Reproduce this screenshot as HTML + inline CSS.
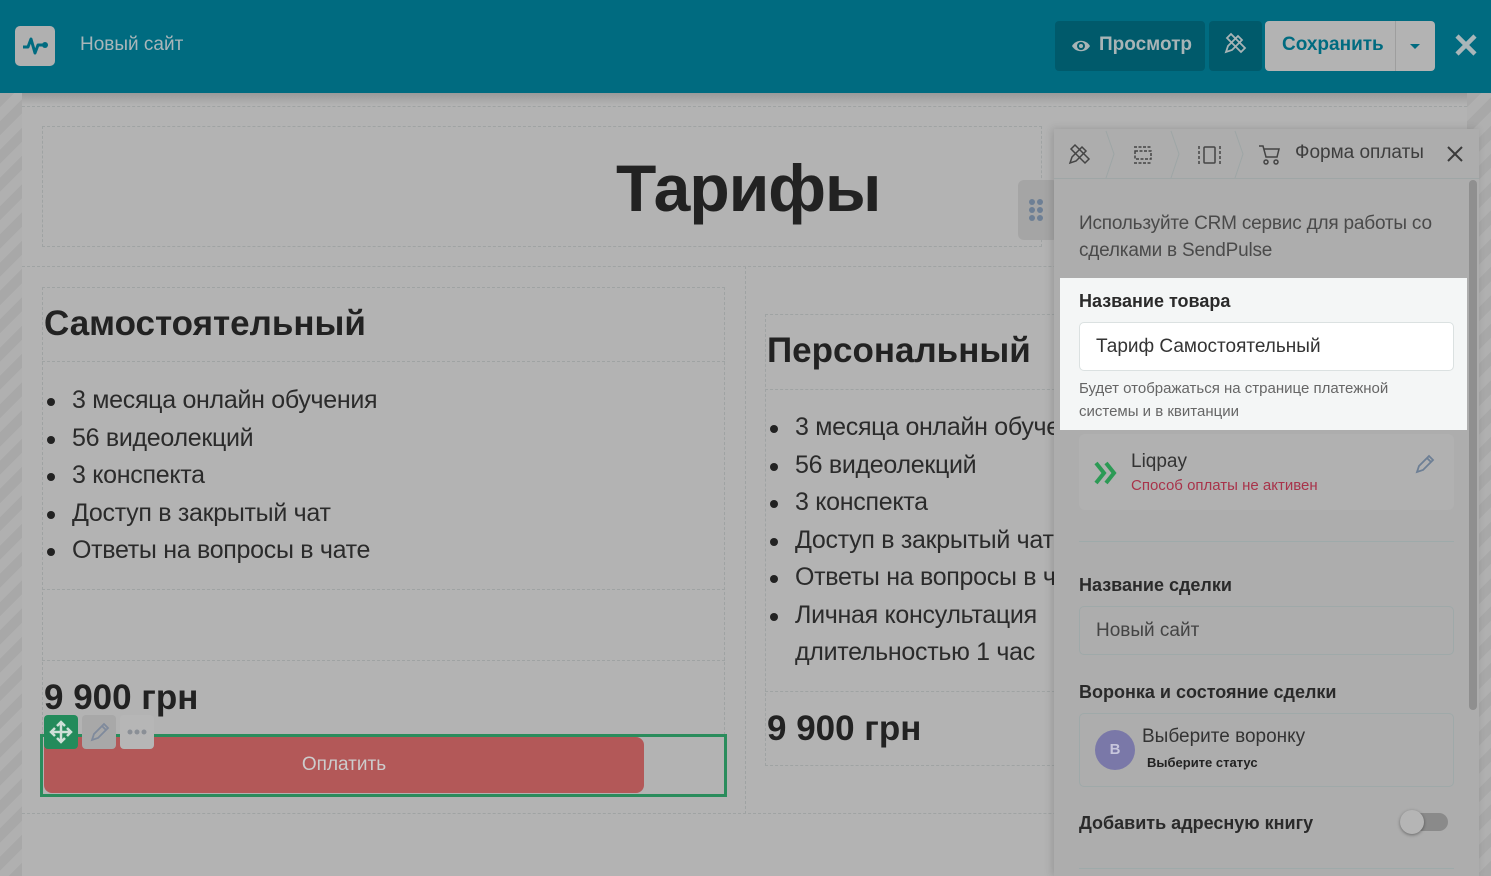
<!DOCTYPE html>
<html><head><meta charset="utf-8"><style>
*{box-sizing:border-box;margin:0;padding:0}
body{width:1491px;height:876px;overflow:hidden;position:relative;font-family:"Liberation Sans","Noto Sans CJK SC",sans-serif;background:#a9a9a9}
.abs{position:absolute}
.stripe{background:repeating-linear-gradient(135deg,#a8a8a8 0 10px,#b0b0b0 10px 20px)}
.hdr{left:0;top:0;width:1491px;height:93px;background:#006b80}
.page{left:22px;top:93px;width:1445px;height:783px;background:#b3b3b3}
.dot{border:1px dashed #9fa3a3}
.li{font-size:25px;color:#2b2b2b;line-height:37.5px;padding-left:28px;position:relative;white-space:nowrap;letter-spacing:-0.3px}
.li:before{content:"";position:absolute;left:3px;top:16px;width:8px;height:8px;border-radius:50%;background:#222}
.li.nb:before{display:none}
.panel{left:1054px;top:129px;width:425px;height:747px;background:#adadad;box-shadow:-2px 0 8px rgba(0,0,0,.15)}
.lbl{font-size:18px;font-weight:bold;color:#2a2a2a}
.inp{border:1px solid #9fa9a9;border-radius:5px;font-size:19px;color:#444}
</style></head><body>
<div class="abs stripe" style="left:0;top:93px;width:22px;height:783px"></div>
<div class="abs stripe" style="left:1467px;top:93px;width:24px;height:783px"></div>
<div class="abs page"></div>
<div class="abs" style="left:22px;top:93px;width:1445px;height:12px;background:linear-gradient(#9a9a9a,#b3b3b3)"></div>
<div class="abs dot" style="left:22px;top:106px;width:1445px;height:0;border-width:1px 0 0 0"></div>
<div class="abs dot" style="left:42px;top:126px;width:1000px;height:121px"></div>
<div class="abs" style="left:616px;top:150px;font-size:66px;font-weight:bold;color:#222;letter-spacing:-1px">Тарифы</div>
<div class="abs dot" style="left:22px;top:266px;width:1445px;height:548px;border-width:1px 0 1px 0"></div>
<div class="abs dot" style="left:745px;top:266px;width:0;height:548px;border-width:0 0 0 1px"></div>
<div class="abs dot" style="left:42px;top:287px;width:683px;height:448px"></div>
<div class="abs dot" style="left:42px;top:361px;width:683px;height:0;border-width:1px 0 0 0"></div>
<div class="abs dot" style="left:42px;top:589px;width:683px;height:0;border-width:1px 0 0 0"></div>
<div class="abs dot" style="left:42px;top:660px;width:683px;height:0;border-width:1px 0 0 0"></div>
<div class="abs" style="left:44px;top:304px;font-size:35px;font-weight:bold;color:#222">Самостоятельный</div>
<div class="abs" style="left:44px;top:382px">
<div class="li">3 месяца онлайн обучения</div><div class="li">56 видеолекций</div><div class="li">3 конспекта</div><div class="li">Доступ в закрытый чат</div><div class="li">Ответы на вопросы в чате</div></div>
<div class="abs" style="left:44px;top:678px;font-size:35px;font-weight:bold;color:#222">9 900 грн</div>
<div class="abs" style="left:40px;top:734px;width:687px;height:63px;border:3px solid #2a8c5c"></div>
<div class="abs" style="left:44px;top:737px;width:600px;height:56px;background:#b35858;border-radius:8px;color:#ccc;font-size:19px;text-align:center;line-height:56px">Оплатить</div>
<div class="abs" style="left:44px;top:715px;width:34px;height:34px;background:#238b5b;border-radius:4px">
<svg width="34" height="34"><path d="M17 7v20M7 17h20M13 11l4-4 4 4M13 23l4 4 4-4M11 13l-4 4 4 4M23 13l4 4-4 4" fill="none" stroke="#cfe0d8" stroke-width="2.5"/></svg></div>
<div class="abs" style="left:82px;top:715px;width:34px;height:34px;background:#a8a8a8;border-radius:4px">
<svg width="34" height="34"><path d="M10 25l2-6 10-10 4 4-10 10z M20 11l4 4" fill="none" stroke="#7f8a9c" stroke-width="1.8"/></svg></div>
<div class="abs" style="left:120px;top:715px;width:34px;height:34px;background:#b6b6b6;border-radius:4px">
<svg width="34" height="34"><circle cx="10" cy="17" r="2.5" fill="#8a8f96"/><circle cx="17" cy="17" r="2.5" fill="#8a8f96"/><circle cx="24" cy="17" r="2.5" fill="#8a8f96"/></svg></div>
<div class="abs dot" style="left:765px;top:314px;width:300px;height:452px;border-right:0"></div>
<div class="abs dot" style="left:765px;top:389px;width:300px;height:0;border-width:1px 0 0 0"></div>
<div class="abs dot" style="left:765px;top:691px;width:300px;height:0;border-width:1px 0 0 0"></div>
<div class="abs" style="left:767px;top:331px;font-size:35px;font-weight:bold;color:#222">Персональный</div>
<div class="abs" style="left:767px;top:409px;width:287px;overflow:hidden">
<div class="li">3 месяца онлайн обучения</div><div class="li">56 видеолекций</div><div class="li">3 конспекта</div><div class="li">Доступ в закрытый чат</div><div class="li">Ответы на вопросы в чате</div><div class="li">Личная консультация</div><div class="li nb">длительностью 1 час</div></div>
<div class="abs" style="left:767px;top:709px;font-size:35px;font-weight:bold;color:#222">9 900 грн</div>
<div class="abs" style="left:1018px;top:180px;width:40px;height:60px;background:#a5a5a5;border-radius:6px">
<svg width="40" height="60"><g fill="#6d7f95"><circle cx="14" cy="22" r="3"/><circle cx="22" cy="22" r="3"/><circle cx="14" cy="30" r="3"/><circle cx="22" cy="30" r="3"/><circle cx="14" cy="38" r="3"/><circle cx="22" cy="38" r="3"/></g></svg></div>

<div class="abs hdr"></div>
<div class="abs" style="left:15px;top:26px;width:40px;height:40px;background:#b0b0b0;border-radius:5px">
<svg width="40" height="40"><path d="M8 21h5l3-8 4 14 3-8h5" fill="none" stroke="#006b80" stroke-width="3" stroke-linejoin="round"/><circle cx="30" cy="19" r="3" fill="#006b80"/></svg></div>
<div class="abs" style="left:80px;top:34px;font-size:19px;color:#a9b6b9">Новый сайт</div>
<div class="abs" style="left:1055px;top:21px;width:150px;height:50px;background:#005a6b;border-radius:4px"></div>
<svg class="abs" style="left:1070px;top:35px" width="22" height="22"><path d="M2 11c4-7 14-7 18 0c-4 7-14 7-18 0z" fill="#a8b4b6"/><circle cx="11" cy="11" r="4" fill="#005a6b"/><circle cx="11" cy="11" r="2" fill="#a8b4b6"/></svg>
<div class="abs" style="left:1099px;top:34px;color:#a8b4b6;font-size:19px;font-weight:bold">Просмотр</div>
<div class="abs" style="left:1209px;top:21px;width:53px;height:50px;background:#005a6b;border-radius:4px">
<svg width="53" height="50"><g fill="none" stroke="#a8b4b6" stroke-width="1.8"><path d="M17 31l2-6 10-10 4 4-10 10z"/><path d="M18 17l4-4 14 14-4 4z"/></g></svg></div>
<div class="abs" style="left:1265px;top:21px;width:170px;height:50px;background:#b3b3b3;border-radius:4px"></div>
<div class="abs" style="left:1282px;top:34px;font-size:19px;font-weight:bold;color:#006b80">Сохранить</div>
<div class="abs" style="left:1395px;top:21px;width:1px;height:50px;background:#9e9e9e"></div>
<div class="abs" style="left:1410px;top:44px;border:5px solid transparent;border-top:5px solid #006b80"></div>
<svg class="abs" style="left:1454px;top:33px" width="24" height="24"><path d="M3 3l18 18M21 3L3 21" stroke="#a9b6b9" stroke-width="4.5"/></svg>

<div class="abs panel"></div>
<div class="abs" style="left:1054px;top:129px;width:425px;height:50px;border-bottom:1px solid #9fa6a6;font-size:19px;color:#3e3e3e">
<svg class="abs" style="left:0;top:0" width="425" height="50"><g fill="none" stroke="#444" stroke-width="1.5">
<path d="M16 34l2-6 10-10 4 4-10 10z"/><path d="M17 20l4-4 14 14-4 4z"/>
<path d="M80 18h18M80 34h18M81 22h16v8h-16z" stroke-dasharray="3 1.5"/>
<path d="M145 17v18M166 17v18" stroke-dasharray="3 2"/><rect x="150" y="18" width="11" height="16" rx="1"/>
<path d="M205 17h4l3 11h11l2-8h-15"/><circle cx="212" cy="33" r="2"/><circle cx="222" cy="33" r="2"/>
<path d="M394 18l14 14M408 18l-14 14" stroke="#3a3a3a" stroke-width="2"/>
</g><path d="M52 2l8 23-8 24M117 2l8 23-8 24M181 2l8 23-8 24" fill="none" stroke="#9ea6a6"/></svg>
<span class="abs" style="left:241px;top:13px">Форма оплаты</span>
</div>
<div class="abs" style="left:1469px;top:180px;width:8px;height:530px;background:#8f8f8f;border-radius:4px"></div>
<div class="abs" style="left:1079px;top:210px;width:370px;font-size:19px;color:#4a4a4a;line-height:27px;letter-spacing:-0.2px">Используйте CRM сервис для работы со сделками в SendPulse</div>
<div class="abs" style="left:1060px;top:278px;width:407px;height:152px;background:#f4f6f6"></div>
<div class="abs lbl" style="left:1079px;top:291px">Название товара</div>
<div class="abs" style="left:1079px;top:322px;width:375px;height:49px;background:#fff;border:1px solid #dbe1e1;border-radius:5px;font-size:19px;color:#333;line-height:47px;padding-left:16px">Тариф Самостоятельный</div>
<div class="abs" style="left:1079px;top:377px;width:370px;font-size:15px;color:#666;line-height:23px">Будет отображаться на странице платежной системы и в квитанции</div>
<div class="abs" style="left:1079px;top:434px;width:375px;height:76px;background:#b1b1b1;border-radius:6px"></div>
<svg class="abs" style="left:1093px;top:460px" width="26" height="26"><path d="M3 3l8 10-8 10M13 3l8 10-8 10" fill="none" stroke="#2c9a55" stroke-width="4"/></svg>
<div class="abs" style="left:1131px;top:451px;font-size:19px;color:#333">Liqpay</div>
<div class="abs" style="left:1131px;top:477px;font-size:15px;color:#a8334a">Способ оплаты не активен</div>
<svg class="abs" style="left:1413px;top:452px" width="24" height="24"><path d="M4 20l2-6 10-10 4 4-10 10z M14 6l4 4" fill="none" stroke="#6d7f95" stroke-width="1.8"/></svg>
<div class="abs" style="left:1079px;top:541px;width:375px;height:1px;background:#9eaaaa"></div>
<div class="abs lbl" style="left:1079px;top:575px">Название сделки</div>
<div class="abs inp" style="left:1079px;top:606px;width:375px;height:49px;line-height:47px;padding-left:16px">Новый сайт</div>
<div class="abs lbl" style="left:1079px;top:682px">Воронка и состояние сделки</div>
<div class="abs inp" style="left:1079px;top:713px;width:375px;height:74px"></div>
<div class="abs" style="left:1095px;top:730px;width:40px;height:40px;border-radius:50%;background:#7a78a8;color:#c7c6dc;font-weight:bold;font-size:15px;text-align:center;line-height:40px">В</div>
<div class="abs" style="left:1142px;top:726px;font-size:19px;color:#333">Выберите воронку</div>
<div class="abs" style="left:1147px;top:755px;font-size:13px;font-weight:bold;color:#222">Выберите статус</div>
<div class="abs lbl" style="left:1079px;top:813px">Добавить адресную книгу</div>
<div class="abs" style="left:1402px;top:813px;width:46px;height:18px;border-radius:9px;background:#8a8a8a"></div>
<div class="abs" style="left:1400px;top:810px;width:24px;height:24px;border-radius:50%;background:#b5b5b5;box-shadow:0 1px 3px rgba(0,0,0,.4)"></div>
<div class="abs" style="left:1079px;top:868px;width:375px;height:1px;background:#9eaaaa"></div>
</body></html>
